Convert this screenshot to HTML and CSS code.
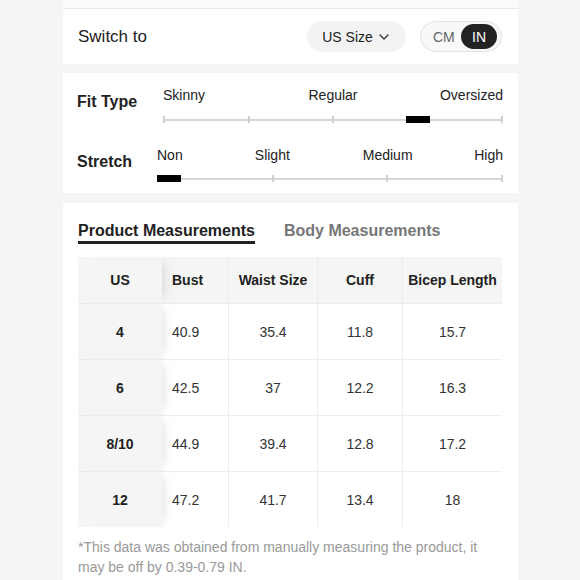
FILE: index.html
```html
<!DOCTYPE html>
<html lang="en">
<head>
<meta charset="utf-8">
<title>Size Guide</title>
<link rel="stylesheet" href="styles.css">
</head>
<body>
<div class="page">
  <div class="topbar"></div>

  <section class="panel switch">
    <span class="switch-label">Switch to</span>
    <div class="switch-controls">
      <div class="size-pill">
        <span>US Size</span>
        <svg class="chev" width="10" height="6" viewBox="0 0 10 6"><path d="M1 1 L5 5 L9 1" fill="none" stroke="#333" stroke-width="1.3" stroke-linecap="round" stroke-linejoin="round"/></svg>
      </div>
      <div class="unit-toggle">
        <span class="unit">CM</span>
        <span class="unit active">IN</span>
      </div>
    </div>
  </section>

  <section class="panel fit">
    <div class="fit-row">
      <div class="fit-label">Fit Type</div>
      <div class="slider slider-fit">
        <div class="slider-labels cols-4">
          <span class="lab-start">Skinny</span>
          <span class="lab-mid">Regular</span>
          <span class="lab-end">Oversized</span>
        </div>
        <div class="track">
          <i></i><i></i><i></i><i></i><i></i>
          <b class="knob" style="left:71.5%"></b>
        </div>
      </div>
    </div>
    <div class="fit-row">
      <div class="fit-label">Stretch</div>
      <div class="slider">
        <div class="slider-labels cols-6">
          <span class="lab-start">Non</span>
          <span class="lab-mid">Slight</span>
          <span class="lab-mid">Medium</span>
          <span class="lab-end">High</span>
        </div>
        <div class="track">
          <i></i><i></i><i></i><i></i>
          <b class="knob" style="left:0%"></b>
        </div>
      </div>
    </div>
  </section>

  <section class="panel measure">
    <div class="tabs">
      <span class="tab active">Product Measurements</span>
      <span class="tab">Body Measurements</span>
    </div>
    <table class="size-table">
      <colgroup>
        <col class="c-us"><col class="c-bust"><col class="c-waist"><col class="c-cuff"><col class="c-bicep">
      </colgroup>
      <thead>
        <tr>
          <th class="first">US</th>
          <th class="bust">Bust</th>
          <th class="sep">Waist Size</th>
          <th class="sep">Cuff</th>
          <th class="sep">Bicep Length</th>
        </tr>
      </thead>
      <tbody>
        <tr>
          <td class="first">4</td><td class="bust">40.9</td><td class="sep">35.4</td><td class="sep">11.8</td><td class="sep">15.7</td>
        </tr>
        <tr>
          <td class="first">6</td><td class="bust">42.5</td><td class="sep">37</td><td class="sep">12.2</td><td class="sep">16.3</td>
        </tr>
        <tr>
          <td class="first">8/10</td><td class="bust">44.9</td><td class="sep">39.4</td><td class="sep">12.8</td><td class="sep">17.2</td>
        </tr>
        <tr class="last">
          <td class="first">12</td><td class="bust">47.2</td><td class="sep">41.7</td><td class="sep">13.4</td><td class="sep">18</td>
        </tr>
      </tbody>
    </table>
    <p class="note">*This data was obtained from manually measuring the product, it may be off by 0.39-0.79 IN.</p>
  </section>
</div>
</body>
</html>
```

FILE: styles.css
```css
* { box-sizing: border-box; }

html, body {
  margin: 0;
  padding: 0;
}

body {
  background: #f5f5f5;
  font-family: "Liberation Sans", Arial, Helvetica, sans-serif;
  color: #222;
  height: 580px;
  overflow: hidden;
}

.page {
  width: 455px;
  margin-left: 63px;
}

.topbar {
  height: 9px;
  background: #fbfbfb;
  border-bottom: 1px solid #e8e8e8;
}

.panel {
  background: #fff;
}

/* Switch row */
.switch {
  height: 55px;
  display: flex;
  align-items: center;
  justify-content: space-between;
  padding: 0 16px 0 15px;
}

.switch-label {
  font-size: 17px;
  color: #222;
}

.switch-controls {
  display: flex;
  align-items: center;
  gap: 14px;
}

.size-pill {
  width: 99px;
  height: 31px;
  border-radius: 16px;
  background: #f3f3f3;
  display: flex;
  align-items: center;
  justify-content: center;
  gap: 6px;
  font-size: 14px;
  color: #222;
  padding-right: 2px;
}

.chev { display: block; margin-top: 1px; }

.unit-toggle {
  width: 82px;
  height: 31px;
  border-radius: 16px;
  border: 1px solid #e2e2e2;
  background: #f8f8f8;
  display: flex;
  align-items: center;
  justify-content: space-between;
  padding: 0 4px 0 12px;
  font-size: 14px;
}

.unit { color: #666; }

.unit.active {
  width: 36px;
  height: 25px;
  border-radius: 13px;
  background: #222;
  color: #fff;
  display: flex;
  align-items: center;
  justify-content: center;
}

/* Fit section */
.fit {
  margin-top: 9px;
  padding: 12px 15px 11px 14px;
  display: flex;
  flex-direction: column;
  gap: 22px;
}

.fit-row {
  display: grid;
  grid-template-columns: 80px 1fr;
}

.fit-label {
  font-size: 16px;
  font-weight: bold;
  line-height: 20px;
  padding-top: 7px;
  color: #222;
}

.slider-fit { padding-left: 6px; }

.slider-labels {
  display: grid;
  font-size: 14px;
  line-height: 20px;
  color: #222;
}

.cols-4 { grid-template-columns: 1fr 2fr 1fr; }
.cols-6 { grid-template-columns: 1fr 2fr 2fr 1fr; }

.lab-start { justify-self: start; }
.lab-mid { justify-self: center; white-space: nowrap; }
.lab-end { justify-self: end; }

.track {
  position: relative;
  height: 7px;
  display: flex;
  justify-content: space-between;
  align-items: center;
  background: linear-gradient(#d6d6d6, #d6d6d6) center / 100% 2px no-repeat;
}

.slider .track { margin-top: 10px; }
.slider-fit .track { margin-top: 11px; }

.track i {
  display: block;
  width: 2px;
  height: 7px;
  background: #cfcfcf;
}

.knob {
  position: absolute;
  top: 0;
  width: 24px;
  height: 7px;
  background: #000;
}

/* Measurements */
.measure {
  margin-top: 10px;
  padding: 18px 16px 20px 15px;
  min-height: 400px;
}

.tabs {
  display: flex;
  align-items: flex-start;
  gap: 29px;
  font-size: 16px;
  font-weight: bold;
  line-height: 20px;
}

.tab { color: #777; }

.tab.active {
  color: #222;
  border-bottom: 3px solid #222;
}

.size-table {
  margin-top: 13px;
  width: 424px;
  table-layout: fixed;
  border-collapse: separate;
  border-spacing: 0;
  font-size: 14px;
}

.c-us { width: 84px; }
.c-bust { width: 66px; }
.c-waist { width: 89px; }
.c-cuff { width: 85px; }
.c-bicep { width: 100px; }

.size-table th {
  height: 46px;
  background: #f5f5f5;
  font-weight: bold;
  color: #222;
  text-align: center;
  padding: 0;
  white-space: nowrap;
}

.size-table td {
  height: 56px;
  text-align: center;
  color: #333;
  padding: 0;
  border-top: 1px solid #ededed;
}

.size-table .sep { border-left: 1px solid #ececec; }

.size-table .bust {
  text-align: left;
  padding-left: 10px;
}

.size-table .first {
  position: relative;
  z-index: 1;
  background: #f5f5f5;
  font-weight: bold;
  color: #222;
  box-shadow: 8px 0 10px -6px rgba(0, 0, 0, 0.12);
}

.size-table td.first { border-top-color: #ebebeb; }

.note {
  margin: 10px 0 0;
  font-size: 14px;
  line-height: 20px;
  color: #999;
}
```
